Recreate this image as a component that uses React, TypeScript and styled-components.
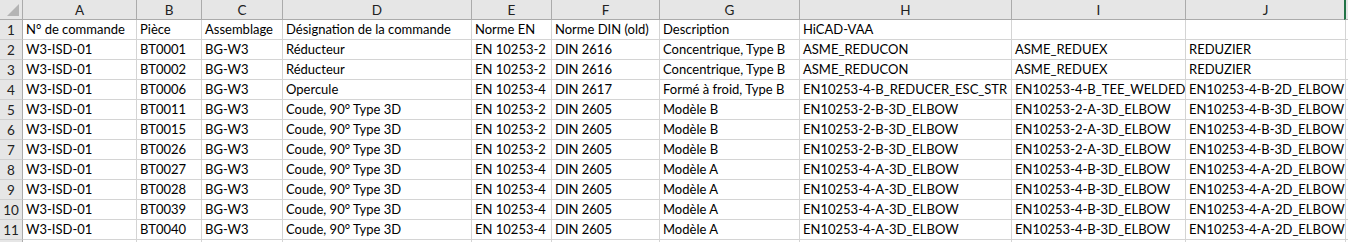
import React from 'react'
import styled, { createGlobalStyle } from 'styled-components'

const GlobalStyle = createGlobalStyle`
    html, body {
        margin: 0;
        padding: 0;
        background: #ffffff;
        overflow: hidden;
    }
`

// column widths incl. the 1px right grid line
const COLS = [23, 114, 65, 81, 189, 80, 108, 140, 212, 174, 160, 60]
const TEMPLATE = COLS.map(w => `${w}px`).join(' ')
const LETTERS = ['A', 'B', 'C', 'D', 'E', 'F', 'G', 'H', 'I', 'J', 'K']

const rows: string[][] = [
    ['N° de commande', 'Pièce', 'Assemblage', 'Désignation de la commande', 'Norme EN', 'Norme DIN (old)', 'Description', 'HiCAD-VAA', '', ''],
    ['W3-ISD-01', 'BT0001', 'BG-W3', 'Réducteur', 'EN 10253-2', 'DIN 2616', 'Concentrique, Type B', 'ASME_REDUCON', 'ASME_REDUEX', 'REDUZIER'],
    ['W3-ISD-01', 'BT0002', 'BG-W3', 'Réducteur', 'EN 10253-2', 'DIN 2616', 'Concentrique, Type B', 'ASME_REDUCON', 'ASME_REDUEX', 'REDUZIER'],
    ['W3-ISD-01', 'BT0006', 'BG-W3', 'Opercule', 'EN 10253-4', 'DIN 2617', 'Formé à froid, Type B', 'EN10253-4-B_REDUCER_ESC_STR', 'EN10253-4-B_TEE_WELDED', 'EN10253-4-B-2D_ELBOW'],
    ['W3-ISD-01', 'BT0011', 'BG-W3', 'Coude, 90° Type 3D', 'EN 10253-2', 'DIN 2605', 'Modèle B', 'EN10253-2-B-3D_ELBOW', 'EN10253-2-A-3D_ELBOW', 'EN10253-4-B-3D_ELBOW'],
    ['W3-ISD-01', 'BT0015', 'BG-W3', 'Coude, 90° Type 3D', 'EN 10253-2', 'DIN 2605', 'Modèle B', 'EN10253-2-B-3D_ELBOW', 'EN10253-2-A-3D_ELBOW', 'EN10253-4-B-3D_ELBOW'],
    ['W3-ISD-01', 'BT0026', 'BG-W3', 'Coude, 90° Type 3D', 'EN 10253-2', 'DIN 2605', 'Modèle B', 'EN10253-2-B-3D_ELBOW', 'EN10253-2-A-3D_ELBOW', 'EN10253-4-B-3D_ELBOW'],
    ['W3-ISD-01', 'BT0027', 'BG-W3', 'Coude, 90° Type 3D', 'EN 10253-4', 'DIN 2605', 'Modèle A', 'EN10253-4-A-3D_ELBOW', 'EN10253-4-B-3D_ELBOW', 'EN10253-4-A-2D_ELBOW'],
    ['W3-ISD-01', 'BT0028', 'BG-W3', 'Coude, 90° Type 3D', 'EN 10253-4', 'DIN 2605', 'Modèle A', 'EN10253-4-A-3D_ELBOW', 'EN10253-4-B-3D_ELBOW', 'EN10253-4-A-2D_ELBOW'],
    ['W3-ISD-01', 'BT0039', 'BG-W3', 'Coude, 90° Type 3D', 'EN 10253-4', 'DIN 2605', 'Modèle A', 'EN10253-4-A-3D_ELBOW', 'EN10253-4-B-3D_ELBOW', 'EN10253-4-A-2D_ELBOW'],
    ['W3-ISD-01', 'BT0040', 'BG-W3', 'Coude, 90° Type 3D', 'EN 10253-4', 'DIN 2605', 'Modèle A', 'EN10253-4-A-3D_ELBOW', 'EN10253-4-B-3D_ELBOW', 'EN10253-4-A-2D_ELBOW'],
    ['', '', '', '', '', '', '', '', '', ''],
]

const Sheet = () => {
    return (
        <Grid>
            <Row>
                <Corner>
                    <Triangle />
                </Corner>
                {LETTERS.map(l => (
                    <ColHead key={l} $active={l === 'K'}>{l}</ColHead>
                ))}
            </Row>
            {rows.map((r, i) => (
                <Row key={i}>
                    <RowHead>{i + 1}</RowHead>
                    {r.map((c, j) => (
                        <Cell key={j}>{c}</Cell>
                    ))}
                    <Cell />
                </Row>
            ))}
        </Grid>
    )
}

export default function App() {
    return (
        <>
            <GlobalStyle />
            <Sheet />
        </>
    )
}

// Grid

const Grid = styled.div`
    width: 1348px;
    height: 242px;
    overflow: hidden;
    font-family: Lato, 'Liberation Sans', sans-serif;
    font-size: 13px;
    color: #000000;
`

const Row = styled.div`
    display: grid;
    grid-template-columns: ${TEMPLATE};
    height: 20px;
`

//Headers

const Corner = styled.div`
    position: relative;
    background-color: #e6e6e6;
    border-right: 1px solid #ababab;
    border-bottom: 1px solid #ababab;
`

const Triangle = styled.div`
    position: absolute;
    right: 3px;
    bottom: 3px;
    width: 0;
    height: 0;
    border-left: 12px solid transparent;
    border-bottom: 12px solid #b4b4b4;
`

const ColHead = styled.div<{ $active?: boolean }>`
    background-color: #e6e6e6;
    border-right: 1px solid #ababab;
    border-bottom: 1px solid #ababab;
    border-left: ${p => (p.$active ? '2px solid #217346' : 'none')};
    margin-left: ${p => (p.$active ? '-2px' : '0')};
    display: flex;
    align-items: center;
    justify-content: center;
    color: #222222;
    font-size: 13.5px;
`

const RowHead = styled.div`
    background-color: #e6e6e6;
    border-right: 1px solid #ababab;
    border-bottom: 1px solid #d0d0d0;
    display: flex;
    align-items: center;
    justify-content: center;
    color: #222222;
    font-size: 13.5px;
`

//Cells

const Cell = styled.div`
    border-right: 1px solid #d4d4d4;
    border-bottom: 1px solid #d4d4d4;
    padding-left: 3px;
    display: flex;
    align-items: center;
    white-space: nowrap;
    overflow: hidden;
    line-height: 19px;
`
